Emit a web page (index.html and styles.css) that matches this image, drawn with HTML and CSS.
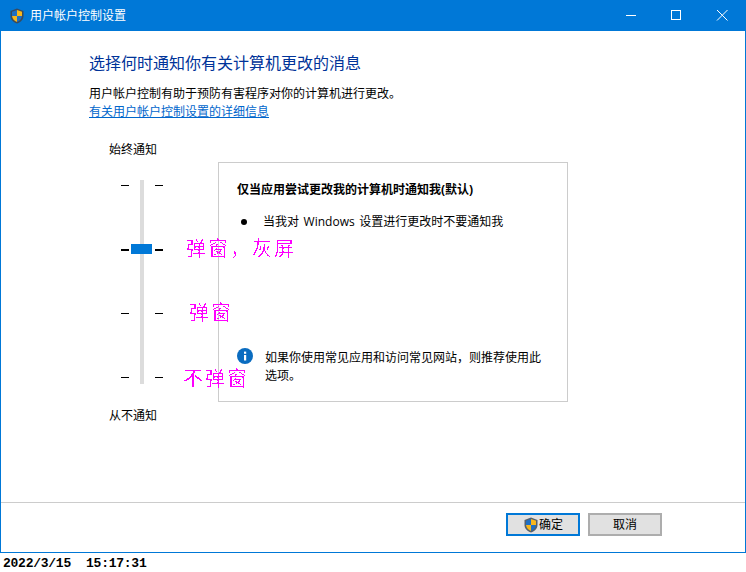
FILE: index.html
```html
<!DOCTYPE html>
<html lang="zh-CN">
<head>
<meta charset="utf-8">
<title>用户帐户控制设置</title>
<link rel="stylesheet" href="styles.css">
</head>
<body>
<svg class="defs" width="0" height="0"><filter id="aliased" x="0" y="0" width="100%" height="100%"><feComponentTransfer><feFuncA type="discrete" tableValues="0 0 1"/></feComponentTransfer></filter></svg>
<div class="window">
  <header class="titlebar">
    <svg class="shield" viewBox="0 0 16 16"><path d="M8 .5 14.5 3v5c0 3.6-2.6 6.2-6.5 7.6C4.100 14.200 1.500 11.600 1.500 8V3z" fill="#3a4a5c"/><path d="M8 2 8 8H3V3.800z" fill="#1f6fc4"/><path d="M8 2l5 1.800V8H8z" fill="#f8b71c"/><path d="M3 8h5v6C5.300 12.900 3.400 11 3 8z" fill="#f8b71c"/><path d="M8 8h5c-.4 3-2.300 4.900-5 6z" fill="#1f6fc4"/></svg>
    <span class="title">用户帐户控制设置</span>
    <div class="controls">
      <svg class="ctl" viewBox="0 0 46 31"><path d="M18 15.500h10" stroke="#fff" fill="none"/></svg>
      <svg class="ctl" viewBox="0 0 46 31"><rect x="17.500" y="10.500" width="9" height="9" stroke="#fff" fill="none"/></svg>
      <svg class="ctl" viewBox="0 0 46 31"><path d="M17 10l10.500 10.500M27.500 10 17 20.500" stroke="#fff" fill="none"/></svg>
    </div>
  </header>
  <main class="content">
    <h1 class="heading">选择何时通知你有关计算机更改的消息</h1>
    <p class="desc">用户帐户控制有助于预防有害程序对你的计算机进行更改。</p>
    <a class="link" href="#">有关用户帐户控制设置的详细信息</a>
    <div class="settings">
      <div class="slider-col">
        <div class="slider-label top">始终通知</div>
        <div class="slider">
          <div class="track"></div>
          <div class="thumb"></div>
          <div class="tick-row"><i></i><i></i></div>
          <div class="tick-row big"><i></i><i></i></div>
          <div class="tick-row"><i></i><i></i></div>
          <div class="tick-row"><i></i><i></i></div>
        </div>
        <div class="slider-label bottom">从不通知</div>
      </div>
      <section class="panel">
        <h2 class="panel-title">仅当应用尝试更改我的计算机时通知我(默认)</h2>
        <div class="bullet-row"><span class="dot"></span><span class="bullet-text">当我对 Windows 设置进行更改时不要通知我</span></div>
        <div class="info-row">
          <svg class="info" viewBox="0 0 16 16"><circle cx="8" cy="8" r="8" fill="#0a6cc0"/><rect x="7" y="7" width="2.200" height="5.500" fill="#fff"/><rect x="7" y="3.600" width="2.200" height="2.200" fill="#fff"/></svg>
          <p class="info-text">如果你使用常见应用和访问常见网站，则推荐使用此选项。</p>
        </div>
      </section>
    </div>
    <div class="note n1">弹窗，灰屏</div>
    <div class="note n2">弹窗</div>
    <div class="note n3">不弹窗</div>
  </main>
  <footer class="footer">
    <button class="btn primary"><svg class="btn-shield" viewBox="0 0 16 16"><path d="M8 .5 14.500 3v5c0 3.600-2.600 6.200-6.500 7.600C4.100 14.200 1.500 11.600 1.500 8V3z" fill="#55606c"/><path d="M8 2v6H3V3.800z" fill="#1f6fc4"/><path d="M8 2l5 1.800V8H8z" fill="#f8b71c"/><path d="M3 8h5v6C5.300 12.900 3.400 11 3 8z" fill="#f8b71c"/><path d="M8 8h5c-.4 3-2.300 4.900-5 6z" fill="#1f6fc4"/></svg>确定</button>
    <button class="btn">取消</button>
  </footer>
</div>
<div class="stamp">2022/3/15  15:17:31</div>
</body>
</html>
```
FILE: styles.css
```css
* { box-sizing: border-box; }
html, body { margin: 0; padding: 0; background: #fff; }
body {
  width: 746px;
  height: 572px;
  overflow: hidden;
  font: 12px/18px "Open Sans", "Noto Sans CJK SC", sans-serif;
  color: #000;
}
.defs { position: absolute; }
.window {
  width: 746px;
  height: 553px;
  border: 1px solid #0078d7;
  border-top: 0;
  display: flex;
  flex-direction: column;
}
.titlebar {
  height: 31px;
  background: #0078d7;
  margin: 0 -1px;
  display: flex;
  align-items: center;
  color: #fff;
  flex: none;
}
.shield { width: 16px; height: 16px; margin-left: 9px; }
.title { margin-left: 5px; }
.controls { margin-left: auto; display: flex; }
.ctl { width: 46px; height: 31px; display: block; }
.content { flex: 1; position: relative; padding: 21px 0 0 88px; }
.heading {
  margin: 0;
  font-size: 16px;
  line-height: 22px;
  font-weight: 400;
  color: #003399;
}
.desc { margin: 11px 0 0; line-height: 18px; }
.link { display: block; color: #0066cc; text-decoration: underline; line-height: 18px; }
.settings { display: flex; margin-top: 9px; align-items: flex-start; }
.slider-col { width: 129px; padding-left: 20px; flex: none; }
.slider-label { line-height: 18px; }
.slider-label.top { margin-top: 11px; }
.slider {
  position: relative;
  width: 42px;
  margin: 21px 0 0 12px;
  height: 204px;
  display: flex;
  flex-direction: column;
  justify-content: space-between;
  padding: 5px 0 6px;
}
.slider-label.bottom { margin-top: 23px; }
.track { position: absolute; left: 19px; top: 0; bottom: 0; width: 4px; background: #dcdcdc; }
.thumb { position: absolute; left: 10px; top: 64px; width: 21px; height: 10px; background: #0078d7; }
.tick-row { display: flex; justify-content: space-between; height: 1px; }
.tick-row i { display: block; width: 8px; height: 1px; background: #000; }
.tick-row.big i { height: 2px; }
.panel {
  width: 350px;
  height: 240px;
  border: 1px solid #ccc;
  padding: 18px 18px 0;
  position: relative;
  margin-top: 32px;
}
.panel-title { margin: 0; font-size: 12px; line-height: 18px; font-weight: 700; }
.bullet-row { display: flex; align-items: center; margin-top: 14px; }
.dot { width: 6px; height: 6px; border-radius: 50%; background: #000; margin: 0 16px 0 4px; flex: none; }
.bullet-text { word-spacing: 1.5px; }
.info-row { position: absolute; left: 18px; top: 185px; display: flex; width: 320px; }
.info { width: 16px; height: 16px; flex: none; margin-right: 12px; }
.info-text { margin: 1px 0 0; width: 282px; }
.note {
  position: absolute;
  font-family: "Noto Sans CJK SC", sans-serif;
  font-weight: 400;
  color: #ff00ff;
  font-size: 20px;
  line-height: 20px;
  letter-spacing: 2px;
  white-space: nowrap;
  filter: url(#aliased);
}
.n1 { left: 185px; top: 207px; }
.n2 { left: 188px; top: 271px; }
.n3 { left: 182px; top: 337px; }
.footer {
  flex: none;
  height: 50px;
  border-top: 1px solid #ccc;
  display: flex;
  gap: 8px;
  justify-content: flex-end;
  padding: 10px 83px 0 0;
}
.btn {
  width: 74px;
  height: 23px;
  background: #e1e1e1;
  border: 2px solid #adadad;
  padding: 0;
  font: inherit;
  line-height: 18px;
  color: #000;
  display: flex;
  align-items: center;
  justify-content: center;
}
.btn.primary { border-color: #0078d7; }
.btn-shield { width: 16px; height: 16px; }
.stamp {
  font: 700 13px/18px "Liberation Mono", monospace;
  letter-spacing: -.25px;
  white-space: pre;
  padding: 2px 0 0 3px;
}
```
